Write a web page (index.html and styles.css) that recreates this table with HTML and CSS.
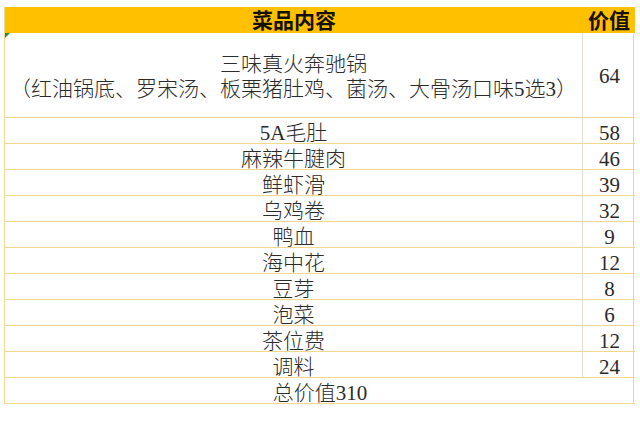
FILE: index.html
```html
<!DOCTYPE html>
<html lang="zh-CN">
<head>
<meta charset="utf-8">
<title>菜品内容</title>
<link rel="stylesheet" href="styles.css">
</head>
<body>
<div class="sheet">
  <div class="head name">菜品内容</div>
  <div class="head price">价值</div>

  <div class="cell name big mark">三味真火奔驰锅<br>（红油锅底、罗宋汤、板栗猪肚鸡、菌汤、大骨汤口味5选3）</div>
  <div class="cell price big">64</div>

  <div class="cell name">5A毛肚</div><div class="cell price">58</div>
  <div class="cell name">麻辣牛腱肉</div><div class="cell price">46</div>
  <div class="cell name">鲜虾滑</div><div class="cell price">39</div>
  <div class="cell name">乌鸡卷</div><div class="cell price">32</div>
  <div class="cell name">鸭血</div><div class="cell price">9</div>
  <div class="cell name">海中花</div><div class="cell price">12</div>
  <div class="cell name">豆芽</div><div class="cell price">8</div>
  <div class="cell name">泡菜</div><div class="cell price">6</div>
  <div class="cell name">茶位费</div><div class="cell price">12</div>
  <div class="cell name">调料</div><div class="cell price">24</div>

  <div class="cell total">总价值310</div>
</div>
</body>
</html>
```

FILE: styles.css
```css
html, body {
  margin: 0;
  padding: 0;
  background: #ffffff;
}

.sheet {
  display: grid;
  grid-template-columns: 578px 52px;
  width: 630px;
  margin: 7px 0 0 4px;
  box-sizing: border-box;
  border-left: 1px solid #f0d98c;
  border-right: 1px solid #f0d98c;
  font-family: "Liberation Serif", "Noto Sans CJK SC", serif;
  font-size: 21px;
  font-weight: 300;
  color: #2b2b2b;
}

.head {
  background: #ffc000;
  height: 26px;
  box-sizing: border-box;
  display: flex;
  align-items: center;
  justify-content: center;
  padding-top: 2px;
  line-height: 22px;
  font-weight: bold;
  color: #151100;
}

.cell {
  height: 26px;
  box-sizing: border-box;
  border-bottom: 1px solid #f0d98c;
  display: flex;
  align-items: center;
  justify-content: center;
  text-align: center;
  padding-top: 4px;
  line-height: 22px;
}

.cell.name {
  border-right: 1px solid #e2ddce;
}

.cell.big {
  height: 85px;
  line-height: 25px;
  padding-top: 3px;
}

.cell.price {
  padding-left: 1px;
}

.cell.total {
  grid-column: 1 / 3;
}

.mark {
  position: relative;
}

.mark::before {
  content: "";
  position: absolute;
  left: 0;
  top: 0;
  border-top: 5px solid #2e8b3a;
  border-right: 5px solid transparent;
}
```
